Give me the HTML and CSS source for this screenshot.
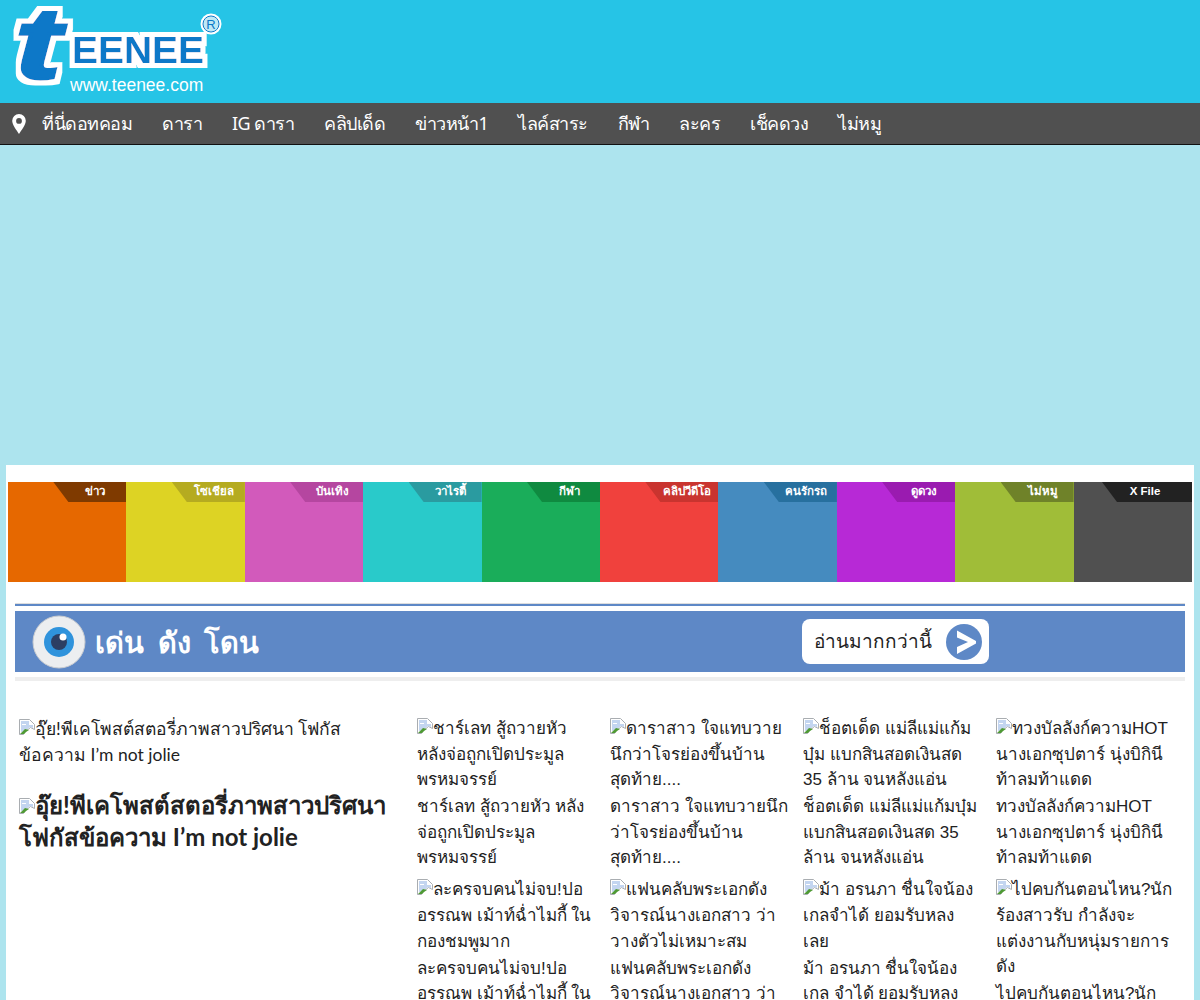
FILE: index.html
```html
<!DOCTYPE html>
<html lang="th">
<head>
    <meta charset="UTF-8">
    <title>Teenee</title>
    <link rel="stylesheet" href="styles.css">
</head>
<body>

    <!-- Logo -->
    <header class="site-header">
        <a class="logo" href="#">
            <svg width="225" height="100" viewBox="0 0 225 100">
                <filter id="logo-outline" filterUnits="userSpaceOnUse" x="0" y="0" width="225" height="100">
                    <feMorphology in="SourceAlpha" operator="dilate" radius="5" result="fat"/>
                    <feFlood flood-color="#fff"/>
                    <feComposite in2="fat" operator="in" result="edge"/>
                    <feMerge>
                        <feMergeNode in="edge"/>
                        <feMergeNode in="SourceGraphic"/>
                    </feMerge>
                </filter>
                <g filter="url(#logo-outline)">
                    <text class="logo-t" x="15" y="78" textLength="46" lengthAdjust="spacingAndGlyphs">t</text>
                    <text class="logo-word" x="72" y="63" textLength="132" lengthAdjust="spacingAndGlyphs">EENEE</text>
                </g>
                <circle cx="211" cy="24" r="9" fill="#bfe9f5" stroke="#fff" stroke-width="3"/>
                <circle cx="211" cy="24" r="8" fill="none" stroke="#0b78c8"/>
                <text class="logo-r" x="211" y="29" text-anchor="middle">R</text>
                <text class="logo-url" x="70" y="91">www.teenee.com</text>
            </svg>
        </a>
    </header>

    <!-- Main menu -->
    <nav class="main-nav">
        <svg class="pin" width="14" height="20" viewBox="0 0 14 20">
            <path fill="#fff" fill-rule="evenodd" d="M7 0a6.8 6.8 0 0 1 6.8 6.8C13.8 11 9.500 16 7 20 4.500 16 .2 11 .2 6.800A6.800 6.800 0 0 1 7 0zm0 4a2.900 2.900 0 1 0 0 5.800A2.900 2.900 0 0 0 7 4z"/>
        </svg>
        <a href="#">ที่นี่ดอทคอม</a>
        <a href="#">ดารา</a>
        <a href="#">IG ดารา</a>
        <a href="#">คลิปเด็ด</a>
        <a href="#">ข่าวหน้า1</a>
        <a href="#">ไลค์สาระ</a>
        <a href="#">กีฬา</a>
        <a href="#">ละคร</a>
        <a href="#">เช็คดวง</a>
        <a href="#">ไม่หมู</a>
    </nav>

    <div class="ad-space"></div>

    <main class="container">

        <!-- Category tiles -->
        <div class="tiles">
            <a class="tile tile-news" href="#"><span class="tab">ข่าว</span></a>
            <a class="tile tile-social" href="#"><span class="tab">โซเชียล</span></a>
            <a class="tile tile-ent" href="#"><span class="tab">บันเทิง</span></a>
            <a class="tile tile-variety" href="#"><span class="tab">วาไรตี้</span></a>
            <a class="tile tile-sport" href="#"><span class="tab">กีฬา</span></a>
            <a class="tile tile-clip" href="#"><span class="tab">คลิปวีดีโอ</span></a>
            <a class="tile tile-car" href="#"><span class="tab">คนรักรถ</span></a>
            <a class="tile tile-horo" href="#"><span class="tab">ดูดวง</span></a>
            <a class="tile tile-nopork" href="#"><span class="tab">ไม่หมู</span></a>
            <a class="tile tile-xfile" href="#"><span class="tab">X File</span></a>
        </div>

        <!-- Section banner -->
        <section class="section">
            <div class="section-top"></div>
            <div class="banner">
                <svg class="eye" width="54" height="54" viewBox="0 0 54 54">
                    <circle cx="27" cy="27" r="26" fill="#eceef0" stroke="#c9ccd0"/>
                    <circle cx="27" cy="27" r="15" fill="#2f93dc"/>
                    <circle cx="27" cy="27" r="8" fill="#2c3e63"/>
                    <circle cx="31" cy="22" r="3.500" fill="#fff"/>
                </svg>
                <h2 class="banner-title">เด่น ดัง โดน</h2>
                <a class="more" href="#">
                    <span>อ่านมากกว่านี้</span>
                    <svg width="36" height="36" viewBox="0 0 36 36">
                        <circle cx="18" cy="18" r="18" fill="#5e88c6"/>
                        <path fill="#fff" d="M11 6.500 30 17v2.500L11 30v-7l11-5-11-4.500z"/>
                    </svg>
                </a>
            </div>
            <div class="section-rule"></div>
        </section>

        <!-- Articles -->
        <section class="articles">
            <div class="lead">
                <a class="lead-alt" href="#"><svg class="broken"><use href="#broken-img"/></svg>อุ๊ย!พีเคโพสต์สตอรี่ภาพสาวปริศนา โฟกัสข้อความ I’m not jolie</a>
                <h3 class="lead-title"><svg class="broken"><use href="#broken-img"/></svg>อุ๊ย!พีเคโพสต์สตอรี่ภาพสาวปริศนา โฟกัสข้อความ I’m not jolie</h3>
            </div>

            <div class="grid">
                <a class="item" href="#">
                    <span class="alt"><svg class="broken"><use href="#broken-img"/></svg>ชาร์เลท สู้ถวายหัว หลังจ่อถูกเปิดประมูล พรหมจรรย์</span>
                    <span class="title">ชาร์เลท สู้ถวายหัว หลังจ่อถูกเปิดประมูล พรหมจรรย์</span>
                </a>
                <a class="item" href="#">
                    <span class="alt"><svg class="broken"><use href="#broken-img"/></svg>ดาราสาว ใจแทบวาย นึกว่าโจรย่องขึ้นบ้าน สุดท้าย....</span>
                    <span class="title">ดาราสาว ใจแทบวายนึก ว่าโจรย่องขึ้นบ้าน สุดท้าย....</span>
                </a>
                <a class="item" href="#">
                    <span class="alt"><svg class="broken"><use href="#broken-img"/></svg>ช็อตเด็ด แม่ลีแม่แก้ม บุ๋ม แบกสินสอดเงินสด 35 ล้าน จนหลังแอ่น</span>
                    <span class="title">ช็อตเด็ด แม่ลีแม่แก้มบุ๋ม แบกสินสอดเงินสด 35 ล้าน จนหลังแอ่น</span>
                </a>
                <a class="item" href="#">
                    <span class="alt"><svg class="broken"><use href="#broken-img"/></svg>ทวงบัลลังก์ความHOT นางเอกซุปตาร์ นุ่งบิกินี ท้าลมท้าแดด</span>
                    <span class="title">ทวงบัลลังก์ความHOT นางเอกซุปตาร์ นุ่งบิกินี ท้าลมท้าแดด</span>
                </a>
                <a class="item" href="#">
                    <span class="alt"><svg class="broken"><use href="#broken-img"/></svg>ละครจบคนไม่จบ!ปอ อรรณพ เม้าท์ฉ่ำไมกี้ ใน กองชมพูมาก</span>
                    <span class="title">ละครจบคนไม่จบ!ปอ อรรณพ เม้าท์ฉ่ำไมกี้ ใน กองชมพูมาก</span>
                </a>
                <a class="item" href="#">
                    <span class="alt"><svg class="broken"><use href="#broken-img"/></svg>แฟนคลับพระเอกดัง วิจารณ์นางเอกสาว ว่า วางตัวไม่เหมาะสม</span>
                    <span class="title">แฟนคลับพระเอกดัง วิจารณ์นางเอกสาว ว่า วางตัวไม่เหมาะสม</span>
                </a>
                <a class="item" href="#">
                    <span class="alt"><svg class="broken"><use href="#broken-img"/></svg>ม้า อรนภา ชื่นใจน้อง เกลจำได้ ยอมรับหลง เลย</span>
                    <span class="title">ม้า อรนภา ชื่นใจน้องเกล จำได้ ยอมรับหลงเลย</span>
                </a>
                <a class="item" href="#">
                    <span class="alt"><svg class="broken"><use href="#broken-img"/></svg>ไปคบกันตอนไหน?นัก ร้องสาวรับ กำลังจะ แต่งงานกับหนุ่มรายการ ดัง</span>
                    <span class="title">ไปคบกันตอนไหน?นัก ร้องสาวรับ กำลังจะ</span>
                </a>
            </div>
        </section>
    </main>

    <!-- Missing picture icon -->
    <svg class="sprites" width="0" height="0">
        <symbol id="broken-img" viewBox="0 0 16 16">
            <path fill="#fff" stroke="#a9adb1" d="M.5.5h10l5 5v5l-4-2-5 4-2 3H.5z"/>
            <path fill="#c3d5f0" d="M2 2h8v4h4v3l-3-1-5 4-4 1z"/>
            <path fill="#4f9a34" d="M1 15l5-5 4 1-3 2-2 2z"/>
            <path fill="#fff" d="M3 5h4v1H3z"/>
        </symbol>
    </svg>

</body>
</html>
```

FILE: styles.css
```css
/* Common Styles */
body {
    margin: 0;
    background-color: #ade4ee;
    color: #222;
    font-family: 'Liberation Sans', 'Noto Sans', sans-serif;
    font-size: 17px;
    line-height: 25.6px;
    overflow: hidden;
    height: 1000px;
}

a {
    color: inherit;
    text-decoration: none;
}

.sprites {
    display: block;
}

/* Logo */
.site-header {
    height: 103px;
    background-color: #26c4e6;
}

.logo {
    display: block;
    width: 225px;
    height: 100px;
}

.logo text {
    font-family: 'Liberation Sans', sans-serif;
    font-weight: bold;
    fill: #0b78c8;
}

.logo-t {
    font-size: 100px;
    font-style: italic;
    stroke: #0b78c8;
    stroke-width: 3px;
}

.logo-word {
    font-size: 37px;
}

.logo .logo-r {
    font-size: 13px;
    font-weight: normal;
}

.logo .logo-url {
    font-size: 17.500px;
    font-weight: normal;
    fill: #fff;
}

/* Main menu */
.main-nav {
    display: flex;
    align-items: center;
    gap: 30px;
    height: 41px;
    padding-left: 12px;
    background-color: #505050;
    border-bottom: 1px solid #111;
    font-family: 'Noto Sans', sans-serif;
    font-size: 18px;
    letter-spacing: -0.5px;
    color: #fff;
}

.pin {
    margin-right: -14px;
}

.ad-space {
    height: 320px;
}

/* Container */
.container {
    margin: 0 6px;
    padding-top: 17px;
    background-color: #fff;
    height: 518px;
}

/* Category tiles */
.tiles {
    display: grid;
    grid-template-columns: repeat(10, 1fr);
    margin: 0 2px;
}

.tile {
    position: relative;
    height: 100px;
}

.tab {
    position: absolute;
    top: 0;
    right: 0;
    width: 73px;
    height: 20px;
    box-sizing: border-box;
    padding-left: 11px;
    text-align: center;
    font-size: 11.500px;
    font-weight: bold;
    line-height: 19px;
    color: #fff;
    clip-path: polygon(0 0, 100% 0, 100% 100%, 15px 100%);
}

.tile-news { background-color: #e66800; }
.tile-news .tab { background-color: #7f3a00; }
.tile-social { background-color: #ddd324; }
.tile-social .tab { background-color: #b5ab20; }
.tile-ent { background-color: #d25abb; }
.tile-ent .tab { background-color: #b546a0; }
.tile-variety { background-color: #29caca; }
.tile-variety .tab { background-color: #2a9ba0; }
.tile-sport { background-color: #1aad5a; }
.tile-sport .tab { background-color: #0f8a40; }
.tile-clip { background-color: #f0413d; }
.tile-clip .tab { background-color: #c9342f; }
.tile-car { background-color: #458bbf; }
.tile-car .tab { background-color: #27709f; }
.tile-horo { background-color: #b729d6; }
.tile-horo .tab { background-color: #9a1bb0; }
.tile-nopork { background-color: #a0bd38; }
.tile-nopork .tab { background-color: #6f8229; }
.tile-xfile { background-color: #505050; }
.tile-xfile .tab {
    width: 90px;
    padding: 0 4px 0 0;
    background-color: #222;
}

/* Section banner */
.section {
    margin: 21px 9px 0;
}

.section-top {
    height: 2px;
    margin-bottom: 5px;
    border-top: 1px solid #ddd;
    background-color: #5e88c6;
}

.banner {
    display: flex;
    align-items: center;
    height: 61px;
    padding-left: 17px;
    background-color: #5e88c6;
}

.banner-title {
    margin: 0 0 0 9px;
    width: 707px;
    font-family: 'Noto Sans', sans-serif;
    font-size: 29px;
    font-weight: bold;
    word-spacing: 6px;
    color: #fff;
}

.more {
    display: flex;
    align-items: center;
    justify-content: space-between;
    box-sizing: border-box;
    width: 187px;
    height: 45px;
    padding: 0 7px 0 12px;
    background-color: #fff;
    border-radius: 8px;
    font-size: 19px;
    color: #222;
}

.section-rule {
    height: 4px;
    margin-top: 5px;
    background-color: #eee;
}

/* Articles */
.articles {
    display: flex;
    margin-top: 35px;
    padding: 0 13px;
}

.lead {
    flex: none;
    width: 398px;
    padding-right: 20px;
    box-sizing: border-box;
}

.lead-alt {
    display: block;
    font-family: 'Lato', 'Noto Sans', sans-serif;
    font-size: 17.500px;
}

.lead-title {
    margin: 22px 0 0;
    font-family: 'Lato', 'Noto Sans', sans-serif;
    font-size: 24px;
    line-height: 32px;
}

.grid {
    display: grid;
    grid-template-columns: repeat(4, 193px);
}

.item {
    display: block;
    padding-right: 15px;
    margin-bottom: 6.400px;
}

.item span {
    display: block;
}

.alt {
    margin-bottom: 1.500px;
}

.broken {
    width: 16px;
    height: 16px;
    vertical-align: baseline;
}
```
